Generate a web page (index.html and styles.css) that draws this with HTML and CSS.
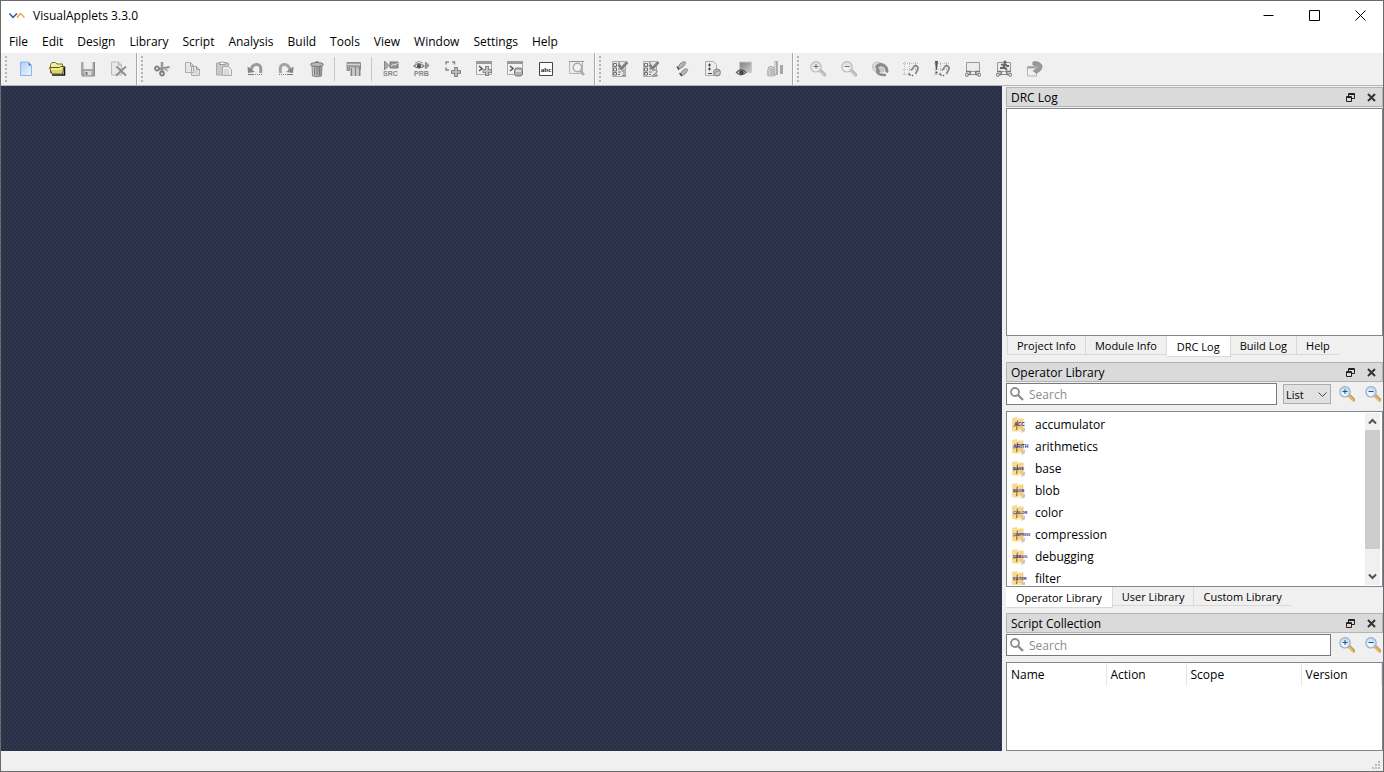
FILE: index.html
```html
<!DOCTYPE html>
<html lang="en">
<head>
<meta charset="utf-8">
<title>VisualApplets 3.3.0</title>
<link rel="stylesheet" href="styles.css">
</head>
<body>
<svg class="defs" aria-hidden="true">
  <defs>
    <linearGradient id="paper" x1="0" y1="0" x2="1" y2="1"><stop offset="0" stop-color="#a9cdf8"/><stop offset="1" stop-color="#f2f8ff"/></linearGradient>
    <linearGradient id="folder" x1="0" y1="0" x2="1" y2="1"><stop offset="0" stop-color="#fbe3a0"/><stop offset="1" stop-color="#ecc266"/></linearGradient>
    <linearGradient id="metal" x1="0" y1="0" x2="1" y2="0"><stop offset="0" stop-color="#d2d2d2"/><stop offset="1" stop-color="#8c8c8c"/></linearGradient>
    <linearGradient id="screen" x1="0" y1="0" x2="1" y2="1"><stop offset="0" stop-color="#7c7c7c"/><stop offset="1" stop-color="#d0d0d0"/></linearGradient>
    <radialGradient id="glass" cx=".4" cy=".7" r=".8"><stop offset="0" stop-color="#f6fdff"/><stop offset="1" stop-color="#a9d3f5"/></radialGradient>
    <symbol id="zoom-base" viewBox="0 0 16 16">
      <path d="M10.500 9.500 15 14" stroke="#8d8d94" stroke-width="3" stroke-linecap="round"/>
      <path d="M10 10 14.300 14.300" stroke="#f0b350" stroke-width="2.600" stroke-linecap="round"/>
      <circle cx="6" cy="5.800" r="5.200" fill="url(#glass)" stroke="#a3adc0" stroke-width="1.200"/>
    </symbol>
    <symbol id="zoom-in" viewBox="0 0 16 16"><use href="#zoom-base"/><path class="mark" d="M3.500 5.500h5M6 3v5"/></symbol>
    <symbol id="zoom-out" viewBox="0 0 16 16"><use href="#zoom-base"/><path class="mark" d="M3.500 5.500h5"/></symbol>
    <symbol id="float" viewBox="0 0 9 9"><path d="M2.500 3V.5h6v5H6M2.500 1.500h6M.5 3.500h5v5h-5zM.5 4.500h5" fill="none" stroke="#222"/></symbol>
    <symbol id="cross" viewBox="0 0 9 9"><path d="M1 1l7 7M8 1 1 8" fill="none" stroke="#333" stroke-width="2"/></symbol>
    <symbol id="search" viewBox="0 0 14 14"><circle cx="5" cy="5" r="4" fill="none" stroke="#8f8f8f" stroke-width="1.800"/><path d="M8 8l5 5" stroke="#8f8f8f" stroke-width="2.400"/></symbol>
    <symbol id="book" viewBox="0 0 16 16">
      <path d="M0 1 5 0v15l-5-1z" fill="#f8dc92"/><path d="M5 1.500h6.500V14H5z" fill="url(#folder)"/>
      <path d="M5.500 3.500 4.500 13" stroke="#9c7d3d" stroke-width="1.300"/><path d="M1.500 9.500l5-2" stroke="#a98a49"/>
      <path d="M9 15.500q0-3.500 4-5v3q-.5 2-4 2z" fill="#c8c8c2"/><path d="M7.500 11.500l3 3.500H5z" fill="#fbeec6"/>
    </symbol>
    <symbol id="sheet-check" viewBox="0 0 16 16">
      <path d="M.5.500h13v15H.5z" fill="#e8e8e8" stroke="#aaa"/>
      <path d="M1.500 2.500h3v3h-3zM1.500 7h3v3h-3zM1.500 11.500h3v2.500h-3zM6 2h2M6 5h3M6 8h2M6 11h3M6 13.500h2" fill="none" stroke="#6e6e6e"/>
      <path d="M6.500 3.500 9.500 7.500 15.500 1" fill="none" stroke="#808080" stroke-width="2.800"/>
    </symbol>
    <symbol id="snap" viewBox="0 0 16 16">
      <path d="M1.500 1v14M6.500 1v14M12.500 1v8M0 2.500h16M0 8.500h16M0 13.500h8" fill="none" stroke="#bdbdbd" stroke-dasharray="1 1"/>
      <path d="M8 9.500l3-4q1.500-1.500 3-.3t.8 3L12.500 13" fill="none" stroke="#888" stroke-width="1.800"/><path d="M5.500 12.500l2 2M9 14l1 1" stroke="#666" stroke-width="1.500"/>
    </symbol>
    <symbol id="link-box" viewBox="0 0 16 16">
      <path d="M1.500 1.500h13v9h-13z" fill="#ececec" stroke="#999"/><path d="M1 10.500h4.500M10.500 10.500H15M2 13.500h3L5.500 10.500M14 13.500h-3L10.500 10.500" fill="none" stroke="#777" stroke-width="1.500"/>
      <circle cx="1.800" cy="13.700" r="1.600" fill="#ddd" stroke="#777"/><circle cx="14.200" cy="13.700" r="1.600" fill="#ddd" stroke="#777"/><path d="M5 13.500h6" stroke="#888"/>
    </symbol>
  </defs>
</svg>

<div class="window">
  <header class="titlebar">
    <svg class="app-logo" viewBox="0 0 16 8" aria-hidden="true"><path d="M.5 1.500 4 5.500 8 1.500" fill="none" stroke="#27578a" stroke-width="1.500"/><path d="M8 5.500 11.500 1.500 15.500 5.500" fill="none" stroke="#f3a13c" stroke-width="1.500"/></svg>
    <h1 class="app-title">VisualApplets 3.3.0</h1>
    <div class="window-controls">
      <button class="window-button" aria-label="Minimize"><svg viewBox="0 0 11 11"><path d="M.5 5.500h10"/></svg></button>
      <button class="window-button" aria-label="Maximize"><svg viewBox="0 0 11 11"><path d="M.5.500h10v10H.5z"/></svg></button>
      <button class="window-button" aria-label="Close"><svg viewBox="0 0 11 11"><path d="M.5.500l10 10M10.500.500l-10 10"/></svg></button>
    </div>
  </header>

  <nav class="menubar" aria-label="Main menu">
    <button class="menu">File</button><button class="menu">Edit</button><button class="menu">Design</button><button class="menu">Library</button><button class="menu">Script</button><button class="menu">Analysis</button><button class="menu">Build</button><button class="menu">Tools</button><button class="menu">View</button><button class="menu">Window</button><button class="menu">Settings</button><button class="menu">Help</button>
  </nav>

  <div class="toolbars">
    <div class="toolbar" role="toolbar" aria-label="File">
      <span class="grip"></span>
      <button class="tool" aria-label="New"><svg viewBox="0 0 16 16"><path d="M2.500 1h8l3 3.500v10h-11z" fill="url(#paper)" stroke="#8db5e6"/><path d="M10.500 1v3.500h3z" fill="#3f80cb"/></svg></button>
      <button class="tool" aria-label="Open"><svg viewBox="0 0 16 16"><path d="M3 14h12.500V5.500" fill="none" stroke="#111" stroke-width="1.500"/><path d="M1.500 12V3.500l1.500-2h3.500L8 3h5.500v3" fill="#f1ee9d" stroke="#777026"/><path d="M.5 6.500h10l1-1h3.500L13.500 13H3z" fill="#d8d36c" stroke="#5e591b"/><path d="M2 8h9l1-1h1" fill="none" stroke="#ffffc7"/></svg></button>
      <button class="tool" aria-label="Save" disabled><svg viewBox="0 0 16 16"><path d="M1 1h14v14H2l-1-1z" fill="#a5a5a5"/><path d="M3.500 1h9v7h-9z" fill="#eee"/><path d="M4.500 10h7v5h-7z" fill="#dadada"/><path d="M5.500 11h2v3h-2z" fill="#777"/><path d="M14.500 1v14H2" fill="none" stroke="#888"/></svg></button>
      <button class="tool" aria-label="Close design" disabled><svg viewBox="0 0 16 16"><path d="M.5 1h7l3 3v10H.5z" fill="#e8e8e8" stroke="#bbb"/><path d="M7.500 1v3h3" fill="none" stroke="#aaa"/><path d="M5.500 5.500 15 14.500M15 5.500 5 14.500" stroke="#8c8c8c" stroke-width="1.800"/></svg></button>
    </div>
    <div class="toolbar" role="toolbar" aria-label="Edit">
      <span class="grip"></span>
      <button class="tool" aria-label="Cut" disabled><svg viewBox="0 0 16 16"><path d="M8 1v10" stroke="#9a9a9a" stroke-width="2.600"/><path d="M5 8l10.500-2" stroke="#8b8b8b" stroke-width="2.200"/><circle cx="3" cy="7.500" r="2" fill="none" stroke="#808080" stroke-width="1.800"/><circle cx="8" cy="12.500" r="2" fill="#ddd" stroke="#808080" stroke-width="1.800"/><path d="M9 7l5 3" stroke="#aaa" stroke-width="1.500"/></svg></button>
      <button class="tool" aria-label="Copy" disabled><svg viewBox="0 0 16 16"><path d="M.5 1.500h5l3 3v7h-8zM6.500 5.500h5l3 3v6h-8z" fill="#e6e6e6" stroke="#aaa"/><path d="M5.500 2v3h3M11.500 5.500v3h3" fill="none" stroke="#999"/><path d="M8 10h5M8 12h5" stroke="#ccc"/></svg></button>
      <button class="tool" aria-label="Paste" disabled><svg viewBox="0 0 16 16"><path d="M.5 2h12v12H.5z" fill="#c9c9c9" stroke="#aaa"/><path d="M3.500 3.500v-2h2L6.500.500l1 1h2v2z" fill="#eee" stroke="#999"/><path d="M6.500 5.500h6l3 3v6h-9z" fill="#ececec" stroke="#aaa"/><path d="M8 9h5M8 11h5M8 13h5" stroke="#c7c7c7"/></svg></button>
      <button class="tool" aria-label="Undo" disabled><svg viewBox="0 0 16 16"><path d="M13.500 12q1.500-9.500-4.500-8.500Q5 4 4 9" fill="none" stroke="#9a9a9a" stroke-width="3"/><path d="M.5 5.500 8 11l-7 1z" fill="#858585"/><path d="M1 13.500h6" stroke="#777"/><path d="M8 13.500h7" stroke="#777" stroke-dasharray="1 1"/></svg></button>
      <button class="tool" aria-label="Redo" disabled><svg viewBox="0 0 16 16"><path d="M2.500 12Q1 2.500 7 3.500q4 .5 5 5.500" fill="none" stroke="#a3a3a3" stroke-width="3"/><path d="M15.500 5.500 8 11l7 1z" fill="#858585"/><path d="M9 13.500h6" stroke="#777"/><path d="M1 13.500h7" stroke="#777" stroke-dasharray="1 1"/></svg></button>
      <button class="tool" aria-label="Delete" disabled><svg viewBox="0 0 16 16"><path d="M3 4h10l-.5 11q-4.500 1.500-9 0z" fill="url(#metal)" stroke="#888"/><path d="M5.500 6v8M8 6v8M10.500 6v8" stroke="#777"/><ellipse cx="8" cy="3.500" rx="6.500" ry="2" fill="#b8b8b8" stroke="#777"/><path d="M6 1.500Q8-.5 10 1.500" fill="none" stroke="#777"/></svg></button>
      <span class="separator"></span>
      <button class="tool" aria-label="Connect" disabled><svg viewBox="0 0 16 16"><path d="M1 1.500h13.500v7H13V6H3.500v3.500H1z" fill="#a5a5a5" stroke="#8c8c8c"/><path d="M1 3.500h13" stroke="#d6d6d6"/><path d="M5.500 7v8M9.500 6v9M13.500 6v9" stroke="#858585" stroke-width="2"/><path d="M7.500 7v8M11.500 7v8" stroke="#cacaca" stroke-width="2"/></svg></button>
      <span class="separator"></span>
      <button class="tool" aria-label="Source simulation" disabled><svg viewBox="0 0 16 16"><path d="M1.500 0v9L6 4.500z" fill="#aaa" stroke="#888"/><path d="M7 1h8v6H7z" fill="#999" stroke="#777"/><path d="M8 5l3-2 1 1 3-2" fill="none" stroke="#ddd"/><text class="icon-caption" x="0" y="15">SRC</text></svg></button>
      <button class="tool" aria-label="Probe simulation" disabled><svg viewBox="0 0 16 16"><path d="M0 5Q4.500 0 10 5 5 9 0 5z" fill="#eee" stroke="#777" stroke-width="1.200"/><circle cx="5" cy="5" r="2.200" fill="#555"/><path d="M1 2Q5-1 9 2" fill="none" stroke="#999"/><path d="M11.500 1v7L15 4.500z" fill="#999" stroke="#888"/><text class="icon-caption" x="0" y="15">PRB</text></svg></button>
      <button class="tool" aria-label="Add module" disabled><svg viewBox="0 0 16 16"><path d="M1 3.500V1h3M7 1h2.500v2.500M1 6.500V9h3" fill="none" stroke="#888" stroke-width="1.500"/><path d="M11 6v10M6 11h10" stroke="#888" stroke-width="4"/><path d="M11 7v8M7 11h8" stroke="#b8b8b8" stroke-width="2"/></svg></button>
      <button class="tool" aria-label="Add script" disabled><svg viewBox="0 0 16 16"><path d="M.5.500h15v13H.5z" fill="#f2f2f2" stroke="#aaa"/><path d="M0 1.500h16" stroke="#999" stroke-width="3"/><path d="M3 5l3 2.500-3 2.500" fill="none" stroke="#555" stroke-width="1.500"/><path d="M11 5v10M6.500 10H16" stroke="#888" stroke-width="4"/><path d="M11 6v8M7.500 10H15" stroke="#c0c0c0" stroke-width="2"/></svg></button>
      <button class="tool" aria-label="Script database" disabled><svg viewBox="0 0 16 16"><path d="M.5.500h15v13H.5z" fill="#f2f2f2" stroke="#aaa"/><path d="M0 1.500h16" stroke="#999" stroke-width="3"/><path d="M3 5l3 2.500-3 2.500" fill="none" stroke="#555" stroke-width="1.500"/><rect x="7.500" y="7" width="8" height="8" rx="2.500" fill="#b0b0b0" stroke="#777"/><path d="M9 9h5v2H9z" fill="#ddd"/></svg></button>
      <button class="tool" aria-label="Add text"><svg viewBox="0 0 16 16"><path d="M1.500 1.500h13v13h-13z" fill="#fff" stroke="#444"/><text class="abc-caption" x="8" y="11">abc</text></svg></button>
      <button class="tool" aria-label="Find" disabled><svg viewBox="0 0 16 16"><path d="M.5.500h13v12H.5z" fill="#ececec" stroke="#b5b5b5"/><path d="M0 .5h15" stroke="#999"/><circle cx="8.500" cy="6.500" r="4.200" fill="#f2f2f2" stroke="#aaa" stroke-width="1.500"/><path d="M11.500 10 15 14" stroke="#aaa" stroke-width="2.500"/></svg></button>
    </div>
    <div class="toolbar" role="toolbar" aria-label="Analysis">
      <span class="grip"></span>
      <button class="tool" aria-label="Design rule check 1" disabled><svg viewBox="0 0 16 16"><use href="#sheet-check"/><path d="M10 10.500l2-1.500v5.500M10 14.500h4" fill="none" stroke="#999" stroke-width="1.300"/></svg></button>
      <button class="tool" aria-label="Design rule check 2" disabled><svg viewBox="0 0 16 16"><use href="#sheet-check"/><path d="M10 10q2-2 4 0 .5 1-4 4.500h5" fill="none" stroke="#999" stroke-width="1.300"/></svg></button>
      <button class="tool" aria-label="Run simulation" disabled><svg viewBox="0 0 16 16"><path d="M4.500 7.500Q4 3 9 1q3.500-.8 2.500 1.500Q10 6 6 7.500zM7 14.500q-.5-4.500 4-6.500 3.500-.5 2.500 1.500Q12 13 8.500 14.500z" fill="#b4b4b4" stroke="#8a8a8a"/><path d="M3 5.500 5 9M5.500 12l2.500 3" stroke="#444" stroke-width="1.300"/></svg></button>
      <button class="tool" aria-label="Design properties" disabled><svg viewBox="0 0 16 16"><path d="M.5.500h8l3 3v11H.5z" fill="#ececec" stroke="#aaa"/><path d="M3 4h3M4.500 2.500v3M3 8h3M4.500 6.500v3M3 12.500h4" stroke="#444"/><circle cx="12" cy="11.500" r="3.500" fill="#c4c4c4" stroke="#888"/><path d="M9 13.500l2-3 4-1" fill="none" stroke="#888"/></svg></button>
      <button class="tool" aria-label="Image viewer" disabled><svg viewBox="0 0 16 16"><path d="M3.500 1h12v10.500h-12z" fill="url(#screen)" stroke="#ccc"/><path d="M.5 11.500Q5 6 10 11.500 5 16 .5 11.500z" fill="#eee" stroke="#666" stroke-width="1.300"/><circle cx="5.500" cy="11.500" r="2.300" fill="#444"/></svg></button>
      <button class="tool" aria-label="Resources" disabled><svg viewBox="0 0 16 16"><rect x="0" y="7" width="9" height="8.500" rx="2" fill="#bcbcbc"/><path d="M7.500 0H11v14H7.500z" fill="#adadad"/><path d="M13 4h3v9h-3z" fill="#a6a6a6"/><path d="M1 6.500l3-1 3 1" fill="none" stroke="#999"/><path d="M2.500 8v6M8.500 1v12" stroke="#d5d5d5"/></svg></button>
    </div>
    <div class="toolbar" role="toolbar" aria-label="View">
      <span class="grip"></span>
      <button class="tool gray-zoom" aria-label="Zoom in" disabled><svg><use href="#zoom-in"/></svg></button>
      <button class="tool gray-zoom" aria-label="Zoom out" disabled><svg><use href="#zoom-out"/></svg></button>
      <button class="tool" aria-label="Zoom reset" disabled><svg viewBox="0 0 16 16"><circle cx="5.500" cy="6" r="5" fill="#ddd" stroke="#bbb"/><path d="M4 7q3-5 8-2.500 4 3 2.500 7" fill="none" stroke="#8b8b8b" stroke-width="3"/><path d="M4 5v7q4 4 10 3v-2l-7-1 3-2z" fill="#8c8c8c"/><circle cx="10" cy="9" r="2.500" fill="#c4c4c4"/></svg></button>
      <button class="tool" aria-label="Snap to grid" disabled><svg><use href="#snap"/></svg></button>
      <button class="tool" aria-label="Snap all" disabled><svg viewBox="0 0 16 16"><use href="#snap"/><path d="M1 0h3L3 9H2zM1.500 10.500h2v2h-2z" fill="#555"/></svg></button>
      <button class="tool" aria-label="Show links" disabled><svg><use href="#link-box"/></svg></button>
      <button class="tool" aria-label="Route links" disabled><svg viewBox="0 0 16 16"><use href="#link-box"/><circle cx="9" cy="1" r="1.500" fill="#666"/><path d="M5 4l4-1 2 2h2M9 3 7 7H4M8 6l3 3" fill="none" stroke="#666" stroke-width="1.800"/></svg></button>
      <button class="tool" aria-label="Leave module" disabled><svg viewBox="0 0 16 16"><path d="M.5 5.500h9V15h-9z" fill="#f0f0f0" stroke="#b5b5b5"/><path d="M.5 6.500h9" stroke="#a5a5a5" stroke-width="2"/><path d="M6 1q7-1 9 4 0 5-6 7l-1-2q4-3 3-4.500Q10 4 6 4z" fill="#999" stroke="#8a8a8a"/><path d="M5.500 10l4-3 .5 6z" fill="#999"/></svg></button>
    </div>
  </div>

  <main class="workspace">
    <section class="canvas" aria-label="Design canvas"></section>
    <aside class="docks">
      <section class="dock dock-log">
        <header class="dock-title"><h2>DRC Log</h2><button aria-label="Float"><svg><use href="#float"/></svg></button><button aria-label="Close"><svg><use href="#cross"/></svg></button></header>
        <div class="panel log-panel"></div>
        <div class="tabs" role="tablist"><button class="tab" role="tab">Project Info</button><button class="tab" role="tab">Module Info</button><button class="tab active" role="tab" aria-selected="true">DRC Log</button><button class="tab" role="tab">Build Log</button><button class="tab" role="tab">Help</button></div>
      </section>

      <section class="dock dock-operators">
        <header class="dock-title"><h2>Operator Library</h2><button aria-label="Float"><svg><use href="#float"/></svg></button><button aria-label="Close"><svg><use href="#cross"/></svg></button></header>
        <div class="search-row">
          <label class="search"><svg aria-hidden="true"><use href="#search"/></svg><input type="text" placeholder="Search" aria-label="Search operators"></label>
          <span class="select-wrap"><select aria-label="View mode"><option>List</option><option>Tree</option></select><svg viewBox="0 0 9 6" aria-hidden="true"><path d="M.5.500l4 4 4-4" fill="none" stroke="#444"/></svg></span>
          <button class="zoom-button" aria-label="Zoom in"><svg><use href="#zoom-in"/></svg></button>
          <button class="zoom-button" aria-label="Zoom out"><svg><use href="#zoom-out"/></svg></button>
        </div>
        <div class="panel list-panel">
          <ul class="operator-list">
            <li><svg viewBox="0 0 17 16"><use href="#book" width="16" height="16"/><text x="2" y="9" class="tag">ACC</text></svg>accumulator</li>
            <li><svg viewBox="0 0 17 16"><use href="#book" width="16" height="16"/><text x="1" y="9" class="tag">ARITH</text></svg>arithmetics</li>
            <li><svg viewBox="0 0 17 16"><use href="#book" width="16" height="16"/><text x="1" y="9" class="tag small">BASE</text></svg>base</li>
            <li><svg viewBox="0 0 17 16"><use href="#book" width="16" height="16"/><text x="1" y="9" class="tag small">BLOB</text></svg>blob</li>
            <li><svg viewBox="0 0 17 16"><use href="#book" width="16" height="16"/><text x="1" y="9" class="tag small">COLOR</text></svg>color</li>
            <li><svg viewBox="0 0 17 16"><use href="#book" width="16" height="16"/><text x="1" y="9" class="tag tiny">COMPRESS</text></svg>compression</li>
            <li><svg viewBox="0 0 17 16"><use href="#book" width="16" height="16"/><text x="1" y="9" class="tag small">DEBUG</text></svg>debugging</li>
            <li><svg viewBox="0 0 17 16"><use href="#book" width="16" height="16"/><text x="1" y="9" class="tag small">FILTER</text></svg>filter</li>
          </ul>
          <div class="scrollbar">
            <button aria-label="Scroll up"><svg viewBox="0 0 9 7"><path d="M1 5.500l3.500-3.500L8 5.500"/></svg></button>
            <div class="track"><div class="thumb"></div></div>
            <button aria-label="Scroll down"><svg viewBox="0 0 9 7"><path d="M1 1.500 4.500 5 8 1.500"/></svg></button>
          </div>
        </div>
        <div class="tabs" role="tablist"><button class="tab active" role="tab" aria-selected="true">Operator Library</button><button class="tab" role="tab">User Library</button><button class="tab" role="tab">Custom Library</button></div>
      </section>

      <section class="dock dock-scripts">
        <header class="dock-title"><h2>Script Collection</h2><button aria-label="Float"><svg><use href="#float"/></svg></button><button aria-label="Close"><svg><use href="#cross"/></svg></button></header>
        <div class="search-row">
          <label class="search"><svg aria-hidden="true"><use href="#search"/></svg><input type="text" placeholder="Search" aria-label="Search scripts"></label>
          <button class="zoom-button" aria-label="Zoom in"><svg><use href="#zoom-in"/></svg></button>
          <button class="zoom-button" aria-label="Zoom out"><svg><use href="#zoom-out"/></svg></button>
        </div>
        <div class="panel script-panel">
          <table class="script-table">
            <colgroup><col class="col-name"><col class="col-action"><col class="col-scope"><col class="col-version"></colgroup>
            <thead><tr><th>Name</th><th>Action</th><th>Scope</th><th>Version</th></tr></thead>
          </table>
        </div>
      </section>
    </aside>
  </main>

  <footer class="statusbar"><svg viewBox="0 0 8 8" aria-hidden="true"><path d="M6 0h2v2H6zM3 3h2v2H3zM6 3h2v2H6zM0 6h2v2H0zM3 6h2v2H3zM6 6h2v2H6z" fill="#bcbcbc"/></svg></footer>
</div>
</body>
</html>
```

FILE: styles.css
```css
* { box-sizing: border-box; }

body {
  margin: 0;
  font: 12px/16px "Open Sans", "Noto Sans", sans-serif;
  color: #000;
}

button, input, select { font: inherit; color: inherit; }

button {
  display: flex;
  align-items: center;
  justify-content: center;
  padding: 0;
  border: 0;
  background: none;
}

h1, h2 { margin: 0; font-size: 12px; font-weight: 400; }

.defs { position: absolute; width: 0; height: 0; }

.window {
  display: flex;
  flex-direction: column;
  height: 100vh;
  border: 1px solid #6b6b6b;
  background: #f0f0f0;
}

/* Title bar and menu */
.titlebar {
  display: flex;
  align-items: center;
  height: 30px;
  padding-left: 8px;
  background: #fff;
}
.app-logo { width: 16px; height: 8px; margin-right: 8px; }
.app-title { font-size: 12px; }
.window-controls { display: flex; margin-left: auto; height: 100%; }
.window-button { width: 46px; height: 28px; }
.window-button svg { width: 11px; height: 11px; fill: none; stroke: #000; }

.menubar { display: flex; height: 21px; padding-left: 1px; background: #fff; }
.menu { padding: 0 7px; }

/* Toolbars */
.toolbars {
  display: flex;
  height: 34px;
  border-top: 1px solid #fff;
  border-bottom: 1px solid #b4b4b4;
}
.toolbar {
  display: flex;
  align-items: center;
  padding-right: 2px;
  border-right: 1px solid #a8a8a8;
  box-shadow: 1px 0 #fff;
}
.toolbar:last-child { border-right: 0; box-shadow: none; }
.grip {
  width: 2px;
  height: 26px;
  margin: 0 3px 0 4px;
  background: repeating-linear-gradient(#b4b4b4 0 2px, transparent 2px 4px);
}
.tool { width: 31px; height: 31px; }
.tool svg { width: 16px; height: 16px; overflow: visible; }
.separator { width: 6px; height: 24px; background: linear-gradient(90deg, transparent 2px, #c8c8c8 2px 3px, transparent 3px); }
.icon-caption { font: 700 7px "Liberation Sans", sans-serif; fill: #858585; }
.abc-caption { font: 700 7px "Liberation Serif", serif; fill: #222; text-anchor: middle; }

.mark { fill: none; stroke: #234f83; }
.gray-zoom { filter: grayscale(1); opacity: .75; }

/* Workspace */
.workspace { display: flex; flex: 1; min-height: 0; }
.canvas {
  flex: 1;
  background-color: #2a3046;
  background-image:
    conic-gradient(from 270deg at 1px 1px, #3c4660 90deg, transparent 0),
    conic-gradient(from 270deg at 1px 1px, #3c4660 90deg, transparent 0);
  background-size: 4px 4px;
  background-position: 0 0, 2px 2px;
}
.docks {
  display: flex;
  flex-direction: column;
  gap: 5px;
  width: 381px;
  padding: 1px 0 0 4px;
}
.dock { display: flex; flex-direction: column; min-height: 0; }
.dock-log { flex: 270; }
.dock-operators { flex: 246; }
.dock-scripts { flex: 138; }

.dock-title {
  display: flex;
  align-items: center;
  height: 20px;
  flex: none;
  padding: 0 5px 0 4px;
  border: 1px solid #b4b4b4;
  background: #dadada;
}
.dock-title h2 { flex: 1; padding-top: 1px; }
.dock-title button { width: 12px; height: 16px; margin-left: 9px; }
.dock-title svg { width: 9px; height: 9px; }

.panel { flex: 1; min-height: 0; border: 1px solid #828790; background: #fff; }
.log-panel { margin-top: 1px; }

/* Tabs */
.tabs { display: flex; align-items: flex-start; height: 21px; flex: none; font-size: 11px; }
.tab { height: 19px; padding: 2px 9px 0; border: solid #d9d9d9; border-width: 0 1px 1px 0; }
.tab:last-child { border-right: 0; }
.tab:first-child:not(.active) { margin-left: 1px; border-left-width: 1px; }
.tab.active { height: 21px; padding: 2px 10px 0; background: #fff; }

/* Search rows */
.search-row { display: flex; align-items: center; flex: none; height: 22px; margin: 1px 0 6px; }
.search {
  display: flex;
  align-items: center;
  flex: 1;
  min-width: 0;
  height: 22px;
  padding: 0 4px 0 3px;
  border: 1px solid #7a7a7a;
  background: #fff;
}
.search svg { flex: none; width: 14px; height: 14px; margin-right: 5px; }
.search input { flex: 1; min-width: 0; padding: 2px 0 0; border: 0; outline: 0; background: none; }
.search input::placeholder { color: #8c8c8c; opacity: 1; }
.select-wrap { position: relative; margin-left: 6px; }
.select-wrap select {
  display: block;
  appearance: none;
  width: 48px;
  height: 20px;
  padding: 1px 2px 0;
  border: 1px solid #adadad;
  border-radius: 0;
  background: #e1e1e1;
  font-size: 11px;
}
.select-wrap svg { position: absolute; right: 4px; top: 8px; width: 9px; height: 6px; pointer-events: none; }
.zoom-button { width: 16px; height: 20px; margin-left: 8px; }
.zoom-button + .zoom-button { margin: 0 2px 0 10px; }
.zoom-button svg { width: 16px; height: 16px; }

/* Operator list */
.list-panel { display: flex; padding: 1px 2px 1px 0; }
.operator-list { flex: 1; margin: 0; padding: 1px 0 0 5px; overflow: hidden; line-height: 14px; list-style: none; }
.operator-list li { display: flex; align-items: center; height: 22px; }
.operator-list svg { width: 17px; height: 16px; margin-right: 6px; overflow: visible; }
.tag { font: 700 5px "Liberation Sans", sans-serif; fill: #2f2fa0; }
.tag.small { font-size: 4px; }
.tag.tiny { font-size: 3px; }
.scrollbar { display: flex; flex-direction: column; width: 15px; background: #f0f0f0; }
.scrollbar button { height: 17px; flex: none; }
.scrollbar svg { width: 9px; height: 7px; fill: none; stroke: #505050; stroke-width: 2; }
.track { flex: 1; }
.thumb { height: 86%; background: #cdcdcd; }

/* Script table */
.script-table { width: 100%; border-collapse: collapse; table-layout: fixed; }
.script-table th { height: 23px; padding: 0 4px; border-right: 1px solid #e5e5e5; font-weight: 400; text-align: left; }
.col-name { width: 99px; }
.col-action { width: 80px; }
.col-scope { width: 115px; }

.statusbar { display: flex; align-items: flex-end; justify-content: flex-end; height: 20px; flex: none; padding: 2px 3px; }
.statusbar svg { width: 8px; height: 8px; }
```
